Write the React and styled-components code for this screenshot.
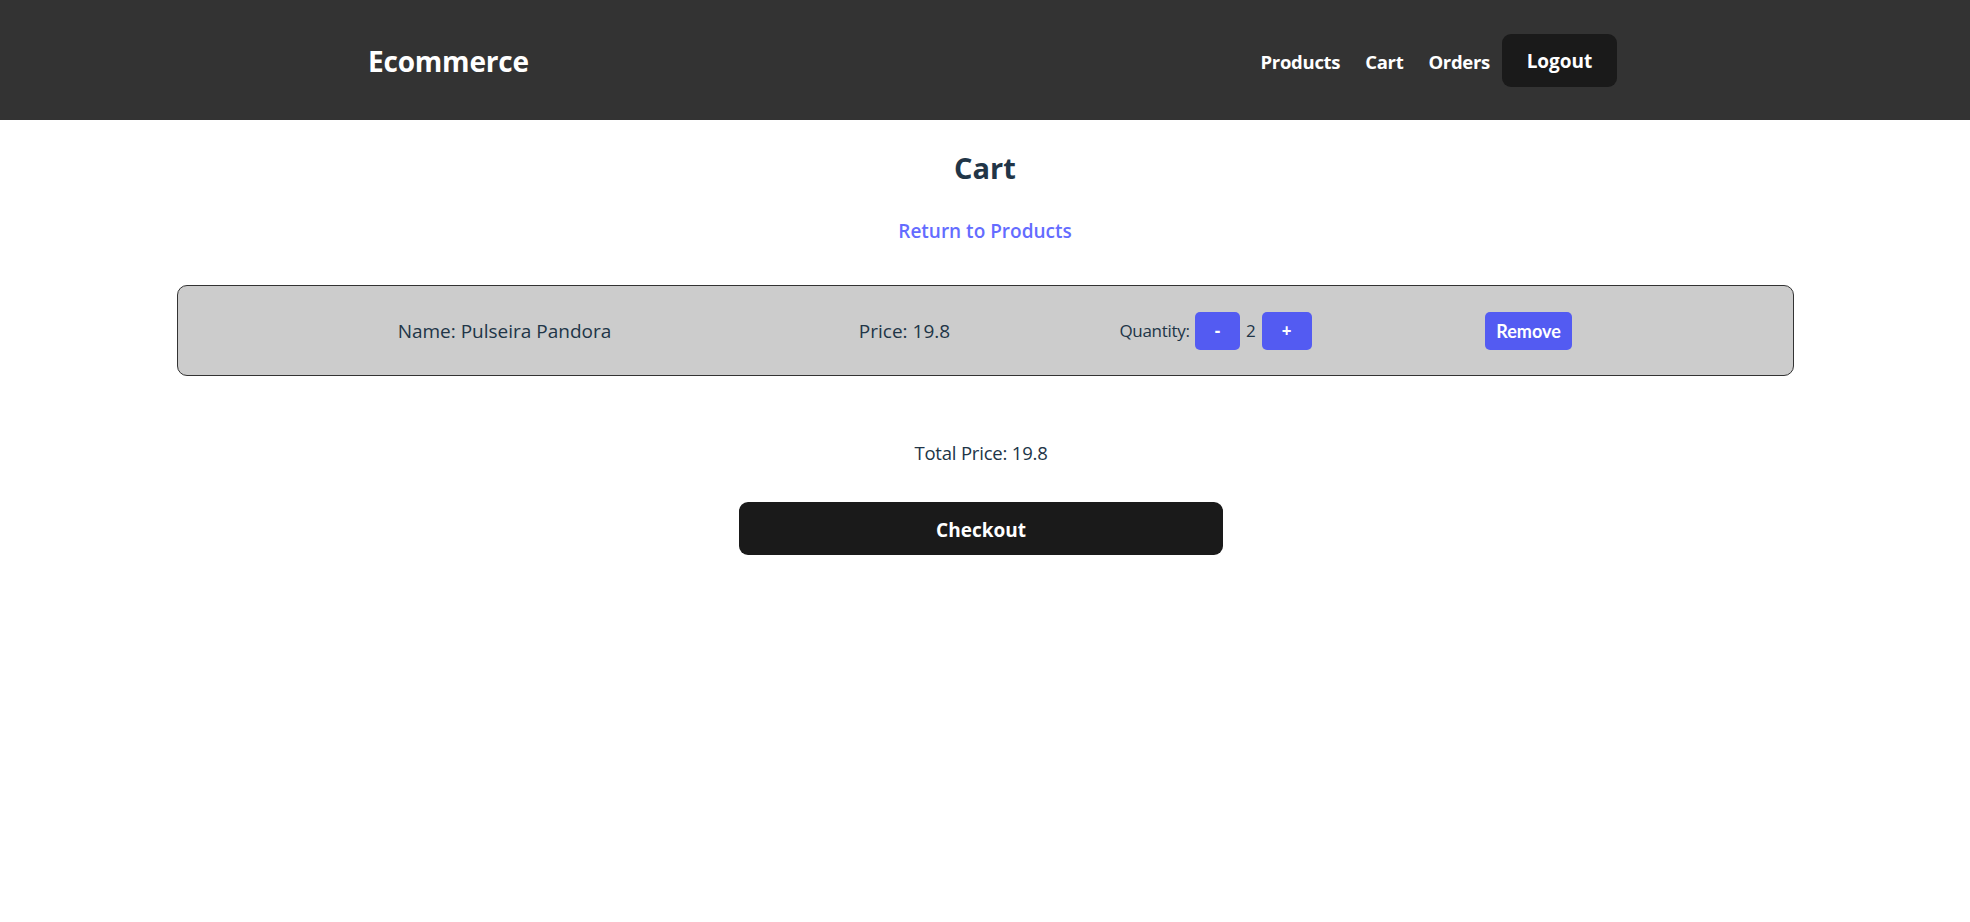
import React from 'react';
import styled, {createGlobalStyle} from 'styled-components';

/* page defaults */
const GlobalStyle = createGlobalStyle`
  html, body {
    margin: 0;
    padding: 0;
    background: #ffffff;
    color: #213547;
    font-family: "Open Sans", "Noto Sans", sans-serif;
  }
`;

const Header = styled.header`
  box-sizing: border-box;
  height: 120px;
  background-color: #333333;
  display: flex;
  align-items: center;
  justify-content: space-between;
  padding: 2px 353px 0 368px;
`;

const Brand = styled.h1`
  margin: 0;
  font-size: 28px;
  font-weight: 700;
  color: #ffffff;
  letter-spacing: -0.2px;
`;

const Nav = styled.nav`
  display: flex;
  align-items: center;
  margin-top: -2px;
`;

const NavLink = styled.a`
  color: #ffffff;
  font-size: 18.5px;
  font-weight: 700;
  text-decoration: none;
  margin-right: 25px;
  letter-spacing: -0.3px;
  padding-top: 3px;

  &:last-of-type {
    margin-right: 12px;
  }
`;

const DarkButton = styled.button`
  background-color: #1a1a1a;
  color: #ffffff;
  border: 1px solid transparent;
  border-radius: 9px;
  font-family: inherit;
  font-size: 19px;
  font-weight: 700;
  cursor: pointer;
  height: ${p => p.$h || 53}px;
  width: ${p => p.$w || 115}px;
  padding: 2px 0 0;
`;

const Main = styled.main`
  display: flex;
  flex-direction: column;
  align-items: center;
`;

const Title = styled.h2`
  margin: 28px 0 0;
  font-size: 29px;
  line-height: 40px;
  font-weight: 700;
  color: #213547;
`;

const BackLink = styled.a`
  margin-top: 28px;
  font-size: 19px;
  line-height: 30px;
  font-weight: 600;
  color: #646cff;
  text-decoration: none;
`;

const CartCard = styled.div`
  box-sizing: border-box;
  margin-top: 39px;
  width: 1617px;
  height: 91px;
  background-color: #cccccc;
  border: 1px solid #333333;
  border-radius: 10px;
  display: flex;
  align-items: center;
  padding-left: 177px;
`;

const Cell = styled.div`
  width: ${p => p.$w}px;
  margin-left: ${p => p.$ml || 0}px;
  display: flex;
  align-items: center;
  justify-content: center;
  font-size: 19px;
  color: #213547;
`;

const QtyLabel = styled.span`
  font-size: 17px;
  letter-spacing: -0.3px;
`;

const QtyValue = styled.span`
  font-size: 17px;
  margin: 0 6px;
`;

const BlueButton = styled.button`
  background-color: #535bf2;
  color: #ffffff;
  border: none;
  border-radius: 5px;
  height: 38px;
  padding: 0 ${p => p.$px || 20}px;
  font-family: ${p => p.$lato ? '"Lato", sans-serif' : 'inherit'};
  font-size: ${p => p.$lato ? 18 : 17}px;
  font-weight: 700;
  cursor: pointer;
  margin-left: ${p => p.$ml || 0}px;
`;

const Total = styled.p`
  margin: 62px 0 0;
  font-size: 18.5px;
  line-height: 30px;
  color: #213547;
  letter-spacing: -0.2px;
  transform: translateX(-4px);
`;

const CheckoutButton = styled(DarkButton)`
  margin-top: 34px;
  transform: translateX(-4px);
`;

export default function App() {
    const item = {name: 'Pulseira Pandora', price: 19.8, quantity: 2};

    return (
        <>
            <GlobalStyle/>
            <Header>
                <Brand>Ecommerce</Brand>
                <Nav>
                    <NavLink href="#">Products</NavLink>
                    <NavLink href="#">Cart</NavLink>
                    <NavLink href="#">Orders</NavLink>
                    <DarkButton>Logout</DarkButton>
                </Nav>
            </Header>
            <Main>
                <Title>Cart</Title>
                <BackLink href="#">Return to Products</BackLink>
                <CartCard>
                    <Cell $w={300}>Name: {item.name}</Cell>
                    <Cell $w={200} $ml={150}>Price: {item.price}</Cell>
                    <Cell $w={260} $ml={81}>
                        <QtyLabel>Quantity:</QtyLabel>
                        <BlueButton $ml={5} $px={20}>-</BlueButton>
                        <QtyValue>{item.quantity}</QtyValue>
                        <BlueButton $px={20}>+</BlueButton>
                    </Cell>
                    <Cell $w={140} $ml={113}>
                        <BlueButton $lato $px={11}>Remove</BlueButton>
                    </Cell>
                </CartCard>
                <Total>Total Price: {item.price}</Total>
                <CheckoutButton $w={484} $h={53}>Checkout</CheckoutButton>
            </Main>
        </>
    );
}
